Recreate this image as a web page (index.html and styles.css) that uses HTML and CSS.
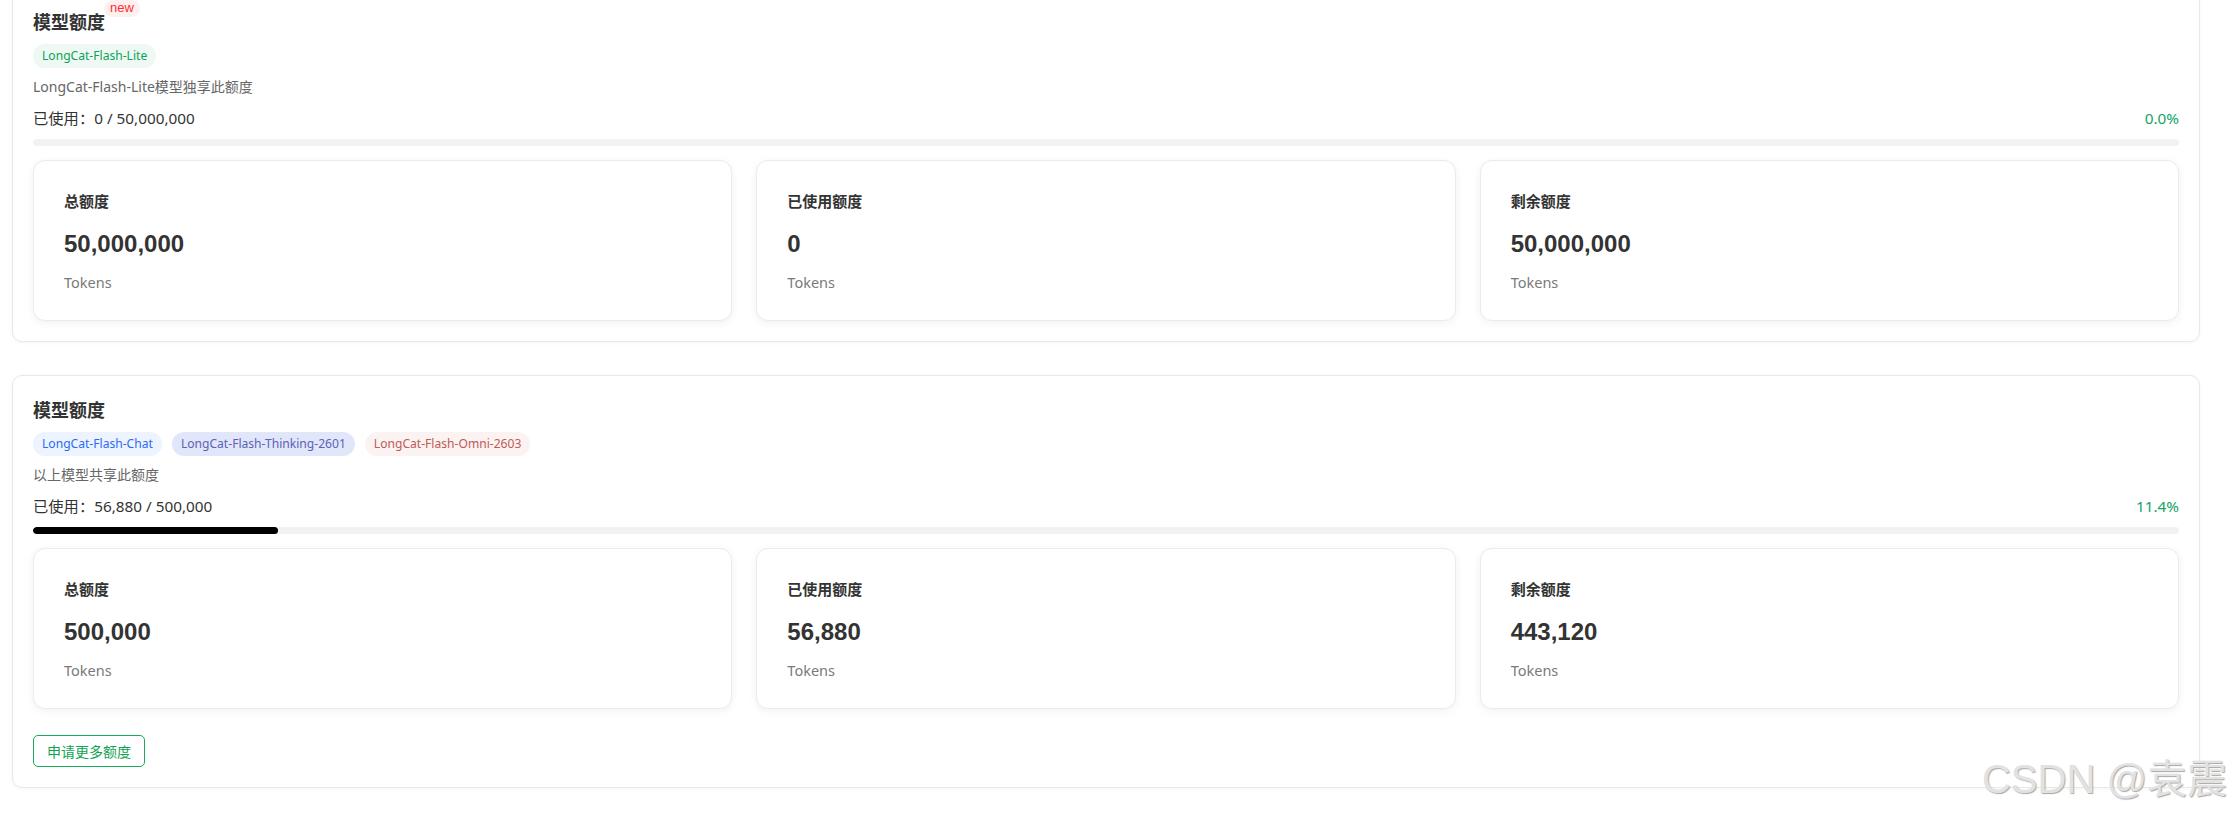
FILE: index.html
```html
<!DOCTYPE html>
<html lang="zh-CN">
<head>
<meta charset="utf-8">
<title>模型额度</title>
<link rel="stylesheet" href="styles.css">
</head>
<body>
<div class="page">
  <section class="quota-card">
    <div class="title-row"><h2 class="title">模型额度<span class="badge-new">new</span></h2></div>
    <div class="tags">
      <span class="tag tag-green">LongCat-Flash-Lite</span>
    </div>
    <p class="desc">LongCat-Flash-Lite模型独享此额度</p>
    <div class="usage">
      <span class="usage-text">已使用：0 / 50,000,000</span>
      <span class="usage-pct">0.0%</span>
    </div>
    <div class="bar"><div class="bar-fill" style="width:0%"></div></div>
    <div class="stats">
      <div class="stat">
        <div class="stat-label">总额度</div>
        <div class="stat-value">50,000,000</div>
        <div class="stat-unit">Tokens</div>
      </div>
      <div class="stat">
        <div class="stat-label">已使用额度</div>
        <div class="stat-value">0</div>
        <div class="stat-unit">Tokens</div>
      </div>
      <div class="stat">
        <div class="stat-label">剩余额度</div>
        <div class="stat-value">50,000,000</div>
        <div class="stat-unit">Tokens</div>
      </div>
    </div>
  </section>

  <section class="quota-card">
    <div class="title-row"><h2 class="title">模型额度</h2></div>
    <div class="tags">
      <span class="tag tag-blue">LongCat-Flash-Chat</span>
      <span class="tag tag-purple">LongCat-Flash-Thinking-2601</span>
      <span class="tag tag-red">LongCat-Flash-Omni-2603</span>
    </div>
    <p class="desc">以上模型共享此额度</p>
    <div class="usage">
      <span class="usage-text">已使用：56,880 / 500,000</span>
      <span class="usage-pct">11.4%</span>
    </div>
    <div class="bar"><div class="bar-fill" style="width:11.4%"></div></div>
    <div class="stats">
      <div class="stat">
        <div class="stat-label">总额度</div>
        <div class="stat-value">500,000</div>
        <div class="stat-unit">Tokens</div>
      </div>
      <div class="stat">
        <div class="stat-label">已使用额度</div>
        <div class="stat-value">56,880</div>
        <div class="stat-unit">Tokens</div>
      </div>
      <div class="stat">
        <div class="stat-label">剩余额度</div>
        <div class="stat-value">443,120</div>
        <div class="stat-unit">Tokens</div>
      </div>
    </div>
    <button class="apply-btn">申请更多额度</button>
  </section>
</div>
<div class="watermark">CSDN @袁震</div>
</body>
</html>
```
FILE: styles.css
```css
* { box-sizing: border-box; }

html, body {
  margin: 0;
  padding: 0;
  background: #ffffff;
}

body {
  position: relative;
  width: 2232px;
  height: 817px;
  overflow: hidden;
  font-family: "Noto Sans", "Noto Sans CJK SC", sans-serif;
  color: #333333;
}

.page {
  padding: 0 32px 0 12px;
  margin-top: -13px;
}

.quota-card {
  border: 1px solid #e8e8e8;
  border-radius: 10px;
  padding: 20px;
  margin-bottom: 33px;
  background: #ffffff;
  box-shadow: 0 1px 4px rgba(0, 0, 0, 0.04);
}

.title-row {
  height: 26px;
}

.title {
  position: relative;
  display: inline-block;
  margin: 0;
  font-size: 18px;
  line-height: 26px;
  font-weight: 700;
  color: #333333;
  font-family: "Noto Sans CJK SC", sans-serif;
}

.badge-new {
  position: absolute;
  left: calc(100% - 1px);
  top: -8px;
  padding: 0 6px;
  height: 17px;
  line-height: 15px;
  border-radius: 9px;
  background: #fff0f0;
  color: #ff2d2d;
  font-family: "Liberation Sans", Arial, sans-serif;
  font-size: 13px;
  font-weight: 400;
}

.tags {
  display: flex;
  gap: 10px;
  margin-top: 10px;
}

.tag {
  display: inline-block;
  height: 24px;
  line-height: 24px;
  padding: 0 9px;
  border-radius: 12px;
  font-size: 12.1px;
}

.tag-green { background: #edf9f2; color: #0ea25a; }
.tag-blue { background: #edf3ff; color: #2a6df2; }
.tag-purple { background: #e2e6fb; color: #5b62b4; }
.tag-red { background: #fbf3f2; color: #c05a55; }

.desc {
  margin: 9px 0 0;
  font-size: 14px;
  line-height: 20px;
  color: #666666;
}

.usage {
  display: flex;
  justify-content: space-between;
  align-items: center;
  margin-top: 10px;
  font-size: 15.3px;
  line-height: 22px;
}

.usage-text { color: #333333; }
.usage-pct { color: #13a566; }

.bar {
  margin-top: 10px;
  height: 7px;
  border-radius: 4px;
  background: #f2f2f2;
  overflow: hidden;
}

.bar-fill {
  height: 100%;
  background: #000000;
  border-radius: 4px;
}

.stats {
  display: grid;
  grid-template-columns: repeat(3, 1fr);
  gap: 24px;
  margin-top: 14px;
}

.stat {
  height: 161px;
  padding: 29px 30px;
  border: 1px solid #ebebeb;
  border-radius: 12px;
  background: #ffffff;
  box-shadow: 0 2px 8px rgba(0, 0, 0, 0.06);
}

.stat-label {
  font-size: 15px;
  line-height: 22px;
  font-weight: 700;
  color: #333333;
  font-family: "Noto Sans CJK SC", sans-serif;
}

.stat-value {
  margin-top: 16px;
  font-family: "Liberation Sans", Arial, sans-serif;
  font-size: 24px;
  line-height: 32px;
  font-weight: 700;
  color: #333333;
}

.stat-unit {
  margin-top: 11px;
  font-size: 14.5px;
  line-height: 22px;
  color: #7a7a7a;
}

.apply-btn {
  display: block;
  margin-top: 26px;
  height: 32px;
  padding: 0 13px;
  border: 1px solid #17ab5a;
  border-radius: 5px;
  background: #ffffff;
  color: #10a352;
  font-family: "Noto Sans CJK SC", sans-serif;
  font-size: 14px;
  line-height: 30px;
}

.watermark {
  position: absolute;
  right: 5px;
  top: 756px;
  font-family: "Liberation Sans", "Noto Sans CJK SC", sans-serif;
  font-size: 40px;
  line-height: 46px;
  color: #e2e2e2;
  text-shadow: 1px 1px 1px #a8a8a8;
  white-space: nowrap;
}
```
